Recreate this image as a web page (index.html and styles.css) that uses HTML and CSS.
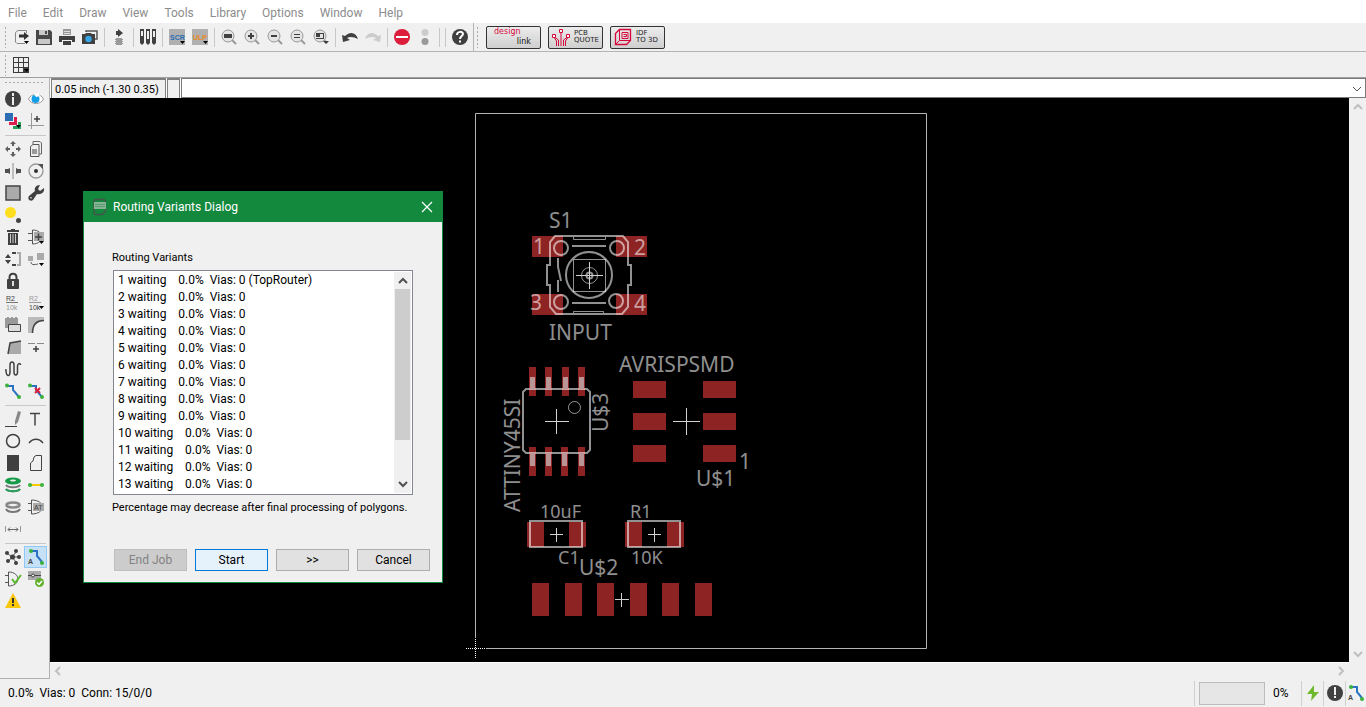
FILE: index.html
```html
<!DOCTYPE html>
<html lang="en">
<head>
    <meta charset="UTF-8">
    <meta name="viewport" content="width=device-width, initial-scale=1.0">
    <title>Board</title>
    <link rel="stylesheet" href="styles.css">
</head>
<body>

<nav class="menubar">
    <a href="#">File</a>
    <a href="#">Edit</a>
    <a href="#">Draw</a>
    <a href="#">View</a>
    <a href="#">Tools</a>
    <a href="#">Library</a>
    <a href="#">Options</a>
    <a href="#">Window</a>
    <a href="#">Help</a>
</nav>

<div class="toolbar">
    <span class="grip"></span>
    <button class="tool" aria-label="Open"><svg viewBox="0 0 16 16"><path d="M10 1.500H5L2.500 3.500V13l1.500 1.500H12M13.500 4V1.500H9" fill="none" stroke="#888"/><path d="M6 5.500h5V3l5 4-5 4V8.500H6z" fill="#333"/><path d="M11 12h5l-2.500 3z"/></svg></button>
    <button class="tool" aria-label="Save"><svg viewBox="0 0 16 16"><path d="M0 1h14l2 2v13H0z" fill="#484848"/><path d="M3 1h9v5H3zM2 10h12v5H2z" fill="#c8c8c8"/><path d="M9 2h2v3H9z" fill="#484848"/></svg></button>
    <button class="tool" aria-label="Print"><svg viewBox="0 0 16 16"><path d="M4 0h8v6H4z" fill="#999"/><path d="M5 2.500h6M5 4.500h6" stroke="#ddd"/><path d="M0 7h16v6h-3v-2H3v2H0zM4 12h8v4H4z" fill="#404040"/></svg></button>
    <button class="tool" aria-label="CAM Processor"><svg viewBox="0 0 16 16"><path d="M4 3V2h11v8h-2" fill="none" stroke="#555" stroke-width="1.500"/><path d="M0 5h3l1-1h5l1 1h3v10H0z" fill="#404040"/><circle cx="6.500" cy="10" r="3.200" fill="#35a5e8"/></svg></button>
    <span class="sep"></span>
    <button class="tool" aria-label="Board"><svg viewBox="0 0 16 16"><path d="M5 2h2V0l5 4-5 4V6H5z" fill="#404040"/><path d="M5 9h6v7H5z" fill="#999"/><path d="M4 10.500h8M4 12.500h8M4 14.500h8" stroke="#999"/></svg></button>
    <span class="sep"></span>
    <button class="tool" aria-label="Use library"><svg viewBox="0 0 16 16"><path d="M0 0h4v14l-2 2-2-2zM6 0h4v14l-2 2-2-2zM12 0h4v14l-2 2-2-2z" fill="#404040"/><path d="M1 2h2v5H1zM7 2h2v8H7zM13 2h2v6h-2z" fill="#eee"/></svg></button>
    <span class="sep"></span>
    <button class="tool" aria-label="Script"><svg viewBox="0 0 16 16"><path d="M0 0h16v16H0z" fill="#b0b0b0"/><text x="1" y="11" class="tiny blue">SCR</text><path d="M11 12h5l-2.500 3z"/></svg></button>
    <button class="tool" aria-label="Run ULP"><svg viewBox="0 0 16 16"><path d="M0 0h16v16H0z" fill="#b0b0b0"/><text x="1" y="11" class="tiny orange">ULP</text><path d="M11 12h5l-2.500 3z"/></svg></button>
    <span class="sep"></span>
    <button class="tool" aria-label="Fit"><svg viewBox="0 0 16 16" class="lens"><path d="M11 11l4 4"/><circle cx="7" cy="7" r="6"/><path d="M3 5h8v4H3z" class="mark"/></svg></button>
    <button class="tool" aria-label="Zoom in"><svg viewBox="0 0 16 16" class="lens"><path d="M11 11l4 4"/><circle cx="7" cy="7" r="6"/><path d="M4 6h2V4h2v2h2v2H8v2H6V8H4z" class="mark"/></svg></button>
    <button class="tool" aria-label="Zoom out"><svg viewBox="0 0 16 16" class="lens"><path d="M11 11l4 4"/><circle cx="7" cy="7" r="6"/><path d="M4 6h6v2H4z" class="mark"/></svg></button>
    <button class="tool" aria-label="Redraw"><svg viewBox="0 0 16 16" class="lens"><path d="M11 11l4 4"/><circle cx="7" cy="7" r="6"/><path d="M4 5h6v1H4zM4 8h6v1H4z" class="mark"/></svg></button>
    <button class="tool" aria-label="Select"><svg viewBox="0 0 16 16" class="lens"><path d="M11 11l3 3"/><circle cx="7" cy="7" r="6"/><path d="M3 4h8v1H3zM3 9h8v1H3zM10 4h1v6h-1zM3 4h4v4H3zM10 12h6l-3 3z" class="mark"/></svg></button>
    <span class="sep"></span>
    <button class="tool" aria-label="Undo"><svg viewBox="0 0 16 16"><path d="M0 6l1 7 7-2-3-2c3-2 7-1 11 1C14 3 8 2 3 7z" fill="#404040"/></svg></button>
    <button class="tool" aria-label="Redo"><svg viewBox="0 0 16 16"><path d="M16 6l-1 7-7-2 3-2C8 7 4 8 0 10 2 3 8 2 13 7z" fill="#ccc"/></svg></button>
    <span class="sep"></span>
    <button class="tool" aria-label="Stop"><svg viewBox="0 0 16 16"><circle cx="8" cy="8" r="8" fill="#dc1e3c"/><path d="M2 7h12v2H2z" fill="#fff"/></svg></button>
    <button class="tool" aria-label="Go"><svg viewBox="0 0 16 16"><circle cx="8" cy="3.500" r="3.500" fill="#ccc"/><circle cx="8" cy="12.500" r="3.500" fill="#999"/></svg></button>
    <span class="sep"></span>
    <span class="sep"></span>
    <button class="tool" aria-label="Help"><svg viewBox="0 0 16 16"><circle cx="8" cy="8" r="8" fill="#404040"/><path d="M5 6c0-4 6-4 6-1 0 2-3 2-3 5" fill="none" stroke="#fff" stroke-width="2"/><path d="M7 11.500h2v2H7z" fill="#fff"/></svg></button>
    <span class="toolbar-end"></span>
    <span class="grip"></span>
    <div class="links">
        <button class="link-btn design"><span>design</span><span class="link-word">link</span></button>
        <button class="link-btn"><svg viewBox="0 0 18 18"><path d="M6.500 18v-6l-4-3M9 18V5M11.500 18v-6l4-3M4.500 18v-5l-2-3M13.500 18v-5l2-3" fill="none" stroke="#d6083b"/><path d="M.500 6.500h3v3h-3zM7.500 1.500h3v3h-3zM14.500 6.500h3v3h-3z" fill="#fff" stroke="#d6083b"/></svg><span>PCB<br>QUOTE</span></button>
        <button class="link-btn"><svg viewBox="0 0 18 18"><path d="M1.500 5.500l4-4h11v11l-4 4h-11z" fill="none" stroke="#d6083b" stroke-width="1.300"/><path d="M5.500 1.500v11h11M1.500 16.500l4-4M8 4.500h6v6H8zM9.500 8.500h3v-2h-3" fill="none" stroke="#d6083b"/></svg><span>IDF<br>TO 3D</span></button>
    </div>
</div>

<div class="toolbar options">
    <span class="grip"></span>
    <button class="tool" aria-label="Grid"><svg viewBox="0 0 16 16"><path d="M0 0h16v16H0z" fill="#3c3c3c"/><path d="M1 1h4v4H1zM6 1h4v4H6zM11 1h4v4h-4zM1 6h4v4H1zM6 6h4v4H6zM11 6h4v4h-4zM1 11h4v4H1zM6 11h4v4H6z" fill="#eee"/><path d="M11 12h5l-2.500 3z"/></svg></button>
</div>

<div class="main">
    <div class="side">
        <span class="grip-h"></span>
        <div class="side-tools">
            <button class="tool" aria-label="Info"><svg viewBox="0 0 16 16"><circle cx="8" cy="8" r="8" fill="#404040"/><path d="M7 2h2v3H7zM7 6h2v8H7z" fill="#eee"/></svg></button>
            <button class="tool" aria-label="Show"><svg viewBox="0 0 16 16"><path d="M.5 8C3 2 13 2 15.500 8 13 14 3 14 .5 8z" fill="#fff" stroke="#999"/><circle cx="7.500" cy="8" r="4" fill="#139ee8"/><path d="M6 3l2 3 4-1-2-3z" fill="#fff"/></svg></button>
            <button class="tool" aria-label="Layers"><svg viewBox="0 0 16 16"><path d="M0 0h8v8H0z" fill="#2b6cb5"/><path d="M9 4h3v8H4V9h5z" fill="#dc1e4c"/><path d="M13 9h3v7H8v-3h5z" fill="#26a05a"/><path d="M11 12h5l-2.500 3z"/></svg></button>
            <button class="tool" aria-label="Mark"><svg viewBox="0 0 16 16"><path d="M3.500 0v16M0 12.500h16" stroke="#999"/><path d="M6 6h6M9 3v6" stroke="#404040" stroke-width="1.500"/></svg></button>
            <span class="side-sep"></span>
            <button class="tool" aria-label="Move"><svg viewBox="0 0 16 16"><path d="M8 0l3 3H9v2H7V3H5zM8 16l3-3H9v-2H7v2H5zM0 8l3-3v2h2v2H3v2zM16 8l-3-3v2h-2v2h2v2z" fill="#606060"/></svg></button>
            <button class="tool" aria-label="Copy"><svg viewBox="0 0 16 16"><path d="M5 3V.5h7l1.500 1.500v11h-2" fill="none" stroke="#666"/><path d="M2.500 5.500L5 3.500h6v12H2.500z" fill="#eee" stroke="#555"/><path d="M4 8h5v5H4z" fill="#999"/></svg></button>
            <button class="tool" aria-label="Mirror"><svg viewBox="0 0 16 16"><path d="M8 0v16" stroke="#aaa" stroke-width="1.400"/><path d="M0 6h3l2-1v6l-2-1H0zM16 6h-3l-2-1v6l2-1h3z" fill="#505050"/></svg></button>
            <button class="tool" aria-label="Rotate"><svg viewBox="0 0 16 16"><circle cx="8" cy="8" r="7" fill="none" stroke="#999" stroke-width="1.300"/><circle cx="8" cy="8" r="2" fill="#333"/><path d="M10 1h5v5z" fill="#505050"/></svg></button>
            <button class="tool" aria-label="Group"><svg viewBox="0 0 16 16"><path d="M1 1h14v14H1z" fill="#aaa" stroke="#444" stroke-width="1.500"/></svg></button>
            <button class="tool" aria-label="Change"><svg viewBox="0 0 16 16"><path d="M16 3l-4 3-2-2 2-4C8 0 6 3 7 6L1 11c-2 3 1 6 4 4l4-6c4 1 8-2 7-6zM3 14l-1-2 2 .5z" fill="#404040"/></svg></button>
            <button class="tool" aria-label="Paste"><svg viewBox="0 0 16 16"><circle cx="5.500" cy="5.500" r="5.500" fill="#fede1f"/><circle cx="13.500" cy="13.500" r="2.500" fill="#444"/></svg></button>
            <span></span>
            <button class="tool" aria-label="Delete"><svg viewBox="0 0 16 16"><path d="M6 0h4v1h4v2H2V1h4zM3 4h10v12H3z" fill="#404040"/><path d="M5.500 5v9M8 5v9M10.500 5v9" stroke="#ccc"/></svg></button>
            <button class="tool" aria-label="Add"><svg viewBox="0 0 16 16"><path d="M0 4.500h4M0 11.500h4M14 8h2M4.500 1v14C17 15 17 1 4.500 1" fill="none" stroke="#555"/><path d="M6 3h10v9H6z" fill="#aaa"/><path d="M7 8h7M10.500 4.500v7" stroke="#444" stroke-width="1.500"/><path d="M11 12h5l-2.500 3z"/></svg></button>
            <button class="tool" aria-label="Pinswap"><svg viewBox="0 0 16 16"><path d="M0 7l3-4 3 4zM0 9h6l-3 4z" fill="#404040"/><path d="M12 2h3v12h-3" fill="none" stroke="#aaa" stroke-width="2"/><path d="M7 2h4M7 14h4" stroke="#444" stroke-width="2"/></svg></button>
            <button class="tool" aria-label="Replace"><svg viewBox="0 0 16 16"><path d="M0 5h5v5H0zM9 2h7v7H9z" fill="#aaa"/><path d="M3 11c0 3 3 3 7 2" fill="none" stroke="#555"/><path d="M11 12h5l-2.500 3z"/></svg></button>
            <button class="tool" aria-label="Lock"><svg viewBox="0 0 16 16"><path d="M4.500 8V4.500c0-5 7-5 7 0V8" fill="none" stroke="#404040" stroke-width="2"/><rect x="2" y="6" width="12" height="10" rx="1" fill="#404040"/><path d="M7 8h2v5H7z" fill="#ddd"/></svg></button>
            <span></span>
            <button class="tool" aria-label="Name"><svg viewBox="0 0 16 16"><text x="1" y="6" class="tiny">R2</text><path d="M1 7.500h12" stroke="#777"/><text x="1" y="15" class="tiny light">10k</text></svg></button>
            <button class="tool" aria-label="Value"><svg viewBox="0 0 16 16"><text x="1" y="6" class="tiny light">R2</text><path d="M1 7.500h12" stroke="#999"/><text x="1" y="15" class="tiny">10k</text><path d="M11 11h5l-2.500 3z"/></svg></button>
            <button class="tool" aria-label="Smash"><svg viewBox="0 0 16 16"><path d="M0 1h2v-1h2v1h2v-1h2v1h2v-1h2v1h1v9h-1v1H0z" fill="#999"/><path d="M3.500 7.500h12v7h-12z" fill="#ddd" stroke="#444"/></svg></button>
            <button class="tool" aria-label="Miter"><svg viewBox="0 0 16 16"><path d="M0 0h16v4C9 4 5 9 5 16H0z" fill="#bbb"/><path d="M16 3.500C8 3.500 4.500 8 4.500 16" fill="none" stroke="#444" stroke-width="1.500"/></svg></button>
            <button class="tool" aria-label="Split"><svg viewBox="0 0 16 16"><path d="M3 15L5 4l11-2v13z" fill="#aaa"/><path d="M3 15L5 4l11-2" fill="none" stroke="#444" stroke-width="1.500"/></svg></button>
            <button class="tool" aria-label="Optimize"><svg viewBox="0 0 16 16"><path d="M0 4.500h7M9 4.500h7" stroke="#888"/><path d="M5 10h6M8 7v6" stroke="#404040" stroke-width="1.500"/></svg></button>
            <button class="tool" aria-label="Meander"><svg viewBox="0 0 16 16"><path d="M0 9h1c0 7 4 7 4 2V4c0-4 4-4 4 0v7c0 4 3.500 4 3.500 0V5c0-3 3-3 3-1" fill="none" stroke="#404040" stroke-width="1.500"/></svg></button>
            <span></span>
            <button class="tool" aria-label="Route"><svg viewBox="0 0 16 16"><path d="M2 3h6v4l6 7" fill="none" stroke="#2b72c2" stroke-width="2"/><circle cx="2" cy="2.500" r="2" fill="#3cb13c"/><circle cx="14" cy="14" r="2" fill="#3cb13c"/></svg></button>
            <button class="tool" aria-label="Ripup"><svg viewBox="0 0 16 16"><path d="M2 3h6v4l6 7" fill="none" stroke="#2b72c2" stroke-width="2"/><circle cx="2" cy="2.500" r="2" fill="#3cb13c"/><circle cx="14" cy="14" r="2" fill="#3cb13c"/><path d="M7 5l5 5M12 5l-5 5" stroke="#dc1e3c" stroke-width="2"/></svg></button>
            <span class="side-sep"></span>
            <button class="tool" aria-label="Wire"><svg viewBox="0 0 16 16"><path d="M0 15.500h12" stroke="#404040"/><path d="M13 0l3 1-3 10-3 3V10z" fill="#888"/></svg></button>
            <button class="tool" aria-label="Text"><svg viewBox="0 0 16 16"><path d="M2 2.500h10M7 2.500v12" stroke="#444" stroke-width="1.500"/></svg></button>
            <button class="tool" aria-label="Circle"><svg viewBox="0 0 16 16"><circle cx="8" cy="8" r="6.500" fill="none" stroke="#404040" stroke-width="1.500"/></svg></button>
            <button class="tool" aria-label="Arc"><svg viewBox="0 0 16 16"><path d="M1 10c4-5 10-5 14 0" fill="none" stroke="#404040" stroke-width="1.500"/></svg></button>
            <button class="tool" aria-label="Rect"><svg viewBox="0 0 16 16"><path d="M2 0h12v16H2z" fill="#404040"/></svg></button>
            <button class="tool" aria-label="Polygon"><svg viewBox="0 0 16 16"><path d="M2.500 15.500V8L5 6l1-4 2-1.500h5.500v15z" fill="none" stroke="#444"/></svg></button>
            <button class="tool" aria-label="Via"><svg viewBox="0 0 16 16"><path d="M1 8c2 3 12 3 14 0M1 12c2 3 12 3 14 0" fill="none" stroke="#777" stroke-width="2"/><path d="M1 12c2 3 12 3 14 0" fill="none" stroke="#26a05a" stroke-width="2"/><ellipse cx="8" cy="4" rx="8" ry="3.500" fill="#169b48"/><ellipse cx="8" cy="3.500" rx="3" ry="1" fill="#eee"/></svg></button>
            <button class="tool" aria-label="Signal"><svg viewBox="0 0 16 16"><path d="M2 8h12" stroke="#f8c800" stroke-width="2"/><circle cx="2" cy="8" r="2" fill="#3cb13c"/><circle cx="14" cy="8" r="2" fill="#3cb13c"/></svg></button>
            <button class="tool" aria-label="Hole"><svg viewBox="0 0 16 16"><path d="M1 10c2 4 12 4 14 0" fill="none" stroke="#777" stroke-width="2"/><ellipse cx="8" cy="6" rx="6.500" ry="2.500" fill="none" stroke="#888" stroke-width="2.500"/></svg></button>
            <button class="tool" aria-label="Attribute"><svg viewBox="0 0 16 16"><path d="M0 4.500h3M0 11.500h3M3.500 1v14C18 15 18 1 3.500 1" fill="none" stroke="#555"/><path d="M5 4h11v8H5z" fill="#aaa"/><text x="6" y="11" class="tiny">AT</text></svg></button>
            <button class="tool" aria-label="Dimension"><svg viewBox="0 0 16 16"><path d="M.5 5v6M15.500 5v6" stroke="#999"/><path d="M3 8.500h10M5 6.500l-2 2 2 2M11 6.500l2 2-2 2" fill="none" stroke="#666"/></svg></button>
            <span></span>
            <span class="side-sep"></span>
            <button class="tool" aria-label="Ratsnest"><svg viewBox="0 0 16 16"><path d="M7 8L2 4M7 8l5-6M7 8h7M7 8l4 5M7 8l-4 5" stroke="#555"/><g fill="#404040"><circle cx="7.500" cy="8" r="2.500"/><circle cx="2" cy="4" r="2"/><circle cx="11" cy="2" r="2"/><circle cx="14" cy="8" r="2"/><circle cx="11" cy="14" r="2"/><circle cx="3" cy="12" r="2"/></g></svg></button>
            <button class="tool active" aria-label="Autorouter"><svg viewBox="0 0 16 16"><path d="M3 2h6v5l5 6" fill="none" stroke="#2b72c2" stroke-width="2"/><circle cx="3" cy="2" r="2" fill="#3cb13c"/><circle cx="14" cy="14" r="2" fill="#3cb13c"/><text x="0" y="15" class="tiny strong">A</text></svg></button>
            <button class="tool" aria-label="ERC"><svg viewBox="0 0 16 16"><path d="M0 4.500h3M0 11.500h3M3.500 1v14C16 15 16 1 3.500 1" fill="none" stroke="#555"/><path d="M7 8l3 4 6-8" fill="none" stroke="#5cb82e" stroke-width="2"/></svg></button>
            <button class="tool" aria-label="DRC"><svg viewBox="0 0 16 16"><path d="M0 0h13v9H0z" fill="#aaa"/><path d="M0 4.500h13" stroke="#444"/><circle cx="5" cy="4.500" r="1.500" fill="#eee" stroke="#444"/><circle cx="11.500" cy="11.500" r="4.500" fill="#62b22e"/><path d="M9 11.500l2 2 3-3.500" fill="none" stroke="#fff" stroke-width="1.500"/></svg></button>
            <button class="tool" aria-label="Errors"><svg viewBox="0 0 16 16"><path d="M8 0l8 15H0z" fill="#fbc70b"/><path d="M7 5h2v5H7zM7 11h2v2H7z" fill="#333"/></svg></button>
        </div>
    </div>

    <div class="work">
        <div class="command">
            <output class="coords">0.05 inch (-1.30 0.35)</output>
            <span class="mark-cell"></span>
            <div class="cmd-box">
                <select class="cmd" aria-label="Command"><option></option></select>
                <svg class="cmd-arrow" viewBox="0 0 8 8"><path d="M0 2l4 4 4-4"/></svg>
            </div>
        </div>
        <div class="view">
            <div class="canvas">
                <svg class="board">
                    <g transform="translate(-50 -98)">
                        <g class="pad">
                            <path d="M532 236h31v21h-31zM616 236h31v21h-31zM532 294h31v21h-31zM616 294h31v21h-31z"/>
                            <path d="M529 367h7v29h-7zM545 367h7v29h-7zM562 367h7v29h-7zM578 367h7v29h-7z"/>
                            <path d="M529 447h7v29h-7zM545 447h7v29h-7zM561 447h7v29h-7zM578 447h7v29h-7z"/>
                            <path d="M633 381h33v17h-33zM633 413h33v17h-33zM633 445h33v17h-33zM703 381h33v17h-33zM703 413h33v17h-33zM703 445h33v17h-33z"/>
                            <path d="M527 522h17v25h-17zM569 522h17v25h-17zM625 522h17v25h-17zM667 522h17v25h-17z"/>
                            <path d="M532 583h17v33h-17zM565 583h17v33h-17zM597 583h17v33h-17zM630 583h17v33h-17zM662 583h17v33h-17zM695 583h17v33h-17z"/>
                        </g>

                        <!-- board dimension and origin -->
                        <path class="outline" d="M475.500 638V113.500H926.500V648.500H486"/>
                        <path class="origin" d="M466 648.500h20M475.500 639v20"/>

                        <!-- S1 switch -->
                        <path class="silk" d="M555 236h68l5 6v23h3v20h-3v22l-6 7h-66l-6-7v-22h-3v-20h3v-23zM572 246h34M572 303h34M558 258v9l3 14M558 280v12"/>
                        <path class="silk thin" d="M573.500 237v2.500h32V237M573.500 313v-1.500h30v1.500M573.500 259.500h32v32h-32z"/>
                        <circle class="silk" cx="561" cy="248" r="7"/>
                        <circle class="silk" cx="617" cy="248" r="7"/>
                        <circle class="silk" cx="561" cy="302" r="7"/>
                        <circle class="silk" cx="616" cy="301" r="7"/>
                        <circle class="silk" cx="589" cy="275" r="23"/>
                        <circle class="silk thin" cx="589.500" cy="275.500" r="8"/>
                        <circle class="silk" cx="589.500" cy="275.500" r="3"/>

                        <!-- U$3 -->
                        <path class="silk" d="M526 389h61l3 3v58l-3 3h-61l-3-3v-58z"/>
                        <path class="lead" d="M530 377h5v12h-5zM546 377h5v12h-5zM563 377h5v12h-5zM579 377h5v12h-5zM530 453h5v13h-5zM546 453h5v13h-5zM562 453h5v13h-5zM579 453h5v13h-5z"/>
                        <circle class="silk thin" cx="574.500" cy="407.500" r="6"/>

                        <!-- C1, R1 -->
                        <path class="silk" d="M530 521h52v26h-52zM628 521h52v26h-52z"/>

                        <path class="cross" d="M576 275.500h27M589.500 262v27M545 421.500h24M556.500 409v25M673 421.500h27M686.500 408v27M550 534.500h13M556.500 528v14M648 534.500h13M654.500 528v14M615 599.500h14M621.500 593v14"/>

                        <g class="label">
                            <text x="549" y="228">S1</text>
                            <text x="549" y="340">INPUT</text>
                            <text x="533" y="254">1</text>
                            <text x="634" y="255">2</text>
                            <text x="530" y="310">3</text>
                            <text x="634" y="311">4</text>
                            <text x="619" y="372">AVRISPSMD</text>
                            <text x="739" y="469">1</text>
                            <text x="696" y="486">U$1</text>
                            <text x="579" y="575">U$2</text>
                            <text transform="translate(520 512) rotate(-90)">ATTINY45SI</text>
                            <text transform="translate(608 432) rotate(-90)">U$3</text>
                        </g>
                        <g class="label small">
                            <text x="540" y="518">10uF</text>
                            <text x="630" y="518">R1</text>
                            <text x="558" y="564">C1</text>
                            <text x="631" y="564">10K</text>
                        </g>
                    </g>
                </svg>

                <div class="dialog" role="dialog" aria-labelledby="dialogTitle">
                    <div class="dialog-title">
                        <svg class="dialog-icon" viewBox="0 0 16 16"><path d="M3 .500h9l1.500 1.500v10l-3 3.500H3L2 14V2z" fill="none" stroke="#46564c" stroke-width="1.500"/><path d="M2 3h12v7H2z" fill="#86b596"/><path d="M3 5.500h10M3 7.500h10" stroke="#5d9a70"/></svg>
                        <span id="dialogTitle">Routing Variants Dialog</span>
                        <button class="close" aria-label="Close"><svg viewBox="0 0 10 10"><path d="M0 0l10 10M10 0L0 10" stroke="#fff" stroke-width="1.200"/></svg></button>
                    </div>
                    <div class="dialog-body">
                        <div id="variantsLabel" class="list-label">Routing Variants</div>
                        <div class="listbox">
                            <ul role="listbox" aria-labelledby="variantsLabel">
                                <li>1 waiting    0.0%  Vias: 0 (TopRouter)</li>
                                <li>2 waiting    0.0%  Vias: 0</li>
                                <li>3 waiting    0.0%  Vias: 0</li>
                                <li>4 waiting    0.0%  Vias: 0</li>
                                <li>5 waiting    0.0%  Vias: 0</li>
                                <li>6 waiting    0.0%  Vias: 0</li>
                                <li>7 waiting    0.0%  Vias: 0</li>
                                <li>8 waiting    0.0%  Vias: 0</li>
                                <li>9 waiting    0.0%  Vias: 0</li>
                                <li>10 waiting    0.0%  Vias: 0</li>
                                <li>11 waiting    0.0%  Vias: 0</li>
                                <li>12 waiting    0.0%  Vias: 0</li>
                                <li>13 waiting    0.0%  Vias: 0</li>
                            </ul>
                            <div class="scroll">
                                <svg viewBox="0 0 8 8"><path d="M0 6l4-4 4 4"/></svg>
                                <span class="thumb"></span>
                                <svg viewBox="0 0 8 8"><path d="M0 2l4 4 4-4"/></svg>
                            </div>
                        </div>
                        <div class="note">Percentage may decrease after final processing of polygons.</div>
                        <div class="buttons">
                            <button disabled>End Job</button>
                            <button class="default">Start</button>
                            <button>&gt;&gt;</button>
                            <button>Cancel</button>
                        </div>
                    </div>
                </div>
            </div>
            <div class="vscroll">
                <svg viewBox="0 0 8 8"><path d="M0 6l4-4 4 4"/></svg>
                <svg viewBox="0 0 8 8"><path d="M0 2l4 4 4-4"/></svg>
            </div>
        </div>
        <div class="hscroll">
            <svg viewBox="0 0 8 8"><path d="M6 0L2 4l4 4"/></svg>
            <svg viewBox="0 0 8 8"><path d="M2 0l4 4-4 4"/></svg>
        </div>
    </div>
</div>

<footer class="status">
    <span class="status-text">0.0%  Vias: 0  Conn: 15/0/0</span>
    <label class="progress"><progress value="0" max="100"></progress><span>0%</span></label>
    <span class="status-icon"><svg viewBox="0 0 16 16"><path d="M9 0L2 9h5l-1 7 8-9H9z" fill="#6fb92c"/></svg></span>
    <span class="status-icon"><svg viewBox="0 0 16 16"><circle cx="8" cy="8" r="8" fill="#404040"/><path d="M7 2h2v8H7zM7 11h2v2H7z" fill="#eee"/></svg></span>
    <span class="status-icon"><svg viewBox="0 0 16 16"><path d="M3 2h6v5l5 6" fill="none" stroke="#2b72c2" stroke-width="2"/><circle cx="3" cy="2" r="2" fill="#3cb13c"/><circle cx="14" cy="14" r="2" fill="#3cb13c"/><text x="0" y="15" class="tiny strong">A</text></svg></span>
</footer>

</body>
</html>
```
FILE: styles.css
```css
* { box-sizing: border-box; }
body { margin: 0; height: 100vh; display: flex; flex-direction: column; background: #f0f0f0; color: #000; font: 12px Roboto, "Noto Sans", sans-serif; overflow: hidden; }
button { font: inherit; color: inherit; padding: 0; margin: 0; }
svg { display: block; overflow: visible; }

/* menu */
.menubar { display: flex; height: 23px; flex: none; align-items: center; gap: 16px; padding: 3px 8px 0; background: #fff; }
.menubar a { color: #8c8c8c; text-decoration: none; }

/* toolbars */
.toolbar { display: flex; align-items: center; height: 29px; flex: none; border-bottom: 1px solid #b4b4b4; }
.toolbar.options { height: 26px; border-bottom: 1px solid #a0a0a0; }
.grip { width: 3px; height: 22px; margin: 0 2px 0 4px; background: radial-gradient(circle, #aaa 1px, transparent 1px) 0 0 / 3px 4px; }
.tool { width: 23px; height: 22px; display: flex; align-items: center; justify-content: center; padding-left: 1px; background: none; border: 1px solid transparent; }
.tool svg { width: 16px; height: 16px; flex: none; }
.tool.active { background: #c5e0f7; border-color: #90c8f6; }
.sep { width: 6px; height: 19px; background: linear-gradient(#c8c8c8, #c8c8c8) center / 1px 100% no-repeat; }
.toolbar-end { width: 2px; align-self: stretch; margin-left: 1px; border-right: 1px solid #b4b4b4; }
.toolbar-end + .grip { margin: 0 7px 0 2px; }
.links { display: flex; gap: 7px; }
.link-btn { width: 55px; height: 23px; display: flex; align-items: center; gap: 4px; padding: 0 3px; border: 1px solid #333; border-radius: 2px; background: linear-gradient(#ececec, #cfcfcf); font: 7px/7px "DejaVu Sans", sans-serif; text-align: left; color: #222; }
.link-btn svg { width: 18px; height: 18px; flex: none; }
.link-btn.design { flex-direction: column; align-items: flex-start; justify-content: center; gap: 0; padding: 0 9px 0 7px; font: 8px/10px "DejaVu Sans", sans-serif; color: #d6083b; }
.link-word { align-self: flex-end; color: #111; }
.lens path, .lens circle { fill: none; stroke: #999; stroke-width: 2; }
.lens circle { stroke-width: 1; fill: #e4e4e4; }
.lens .mark { fill: #404040; stroke: none; }
.tiny { font: 7px "Liberation Sans", sans-serif; fill: #444; }
.tiny.light { fill: #999; }
.tiny.blue { fill: #2b6cb5; font-weight: bold; }
.tiny.orange { fill: #e88a1c; font-weight: bold; }
.tiny.strong { font-weight: bold; }

/* left side */
.main { flex: 1; min-height: 0; display: flex; }
.side { width: 50px; flex: none; border: 1px solid #b0b0b0; border-width: 0 1px 1px 0; }
.grip-h { display: block; height: 4px; margin: 3px 4px 3px; background: radial-gradient(circle, #aaa 1px, transparent 1px) 0 0 / 4px 3px; }
.side-tools { display: grid; grid-template-columns: 23px 23px; grid-auto-rows: min-content; padding-left: 1px; }
.side-sep { grid-column: 1 / 3; height: 6px; margin: 0 1px 0 4px; background: linear-gradient(#c8c8c8, #c8c8c8) center / 100% 1px no-repeat; }

/* work area */
.work { flex: 1; min-width: 0; display: flex; flex-direction: column; }
.command { display: flex; gap: 1px; height: 20px; flex: none; padding-left: 1px; background: #fff; }
.coords { width: 115px; flex: none; padding: 0 3px; white-space: nowrap; font-size: 11px; line-height: 19px; background: #f0f0f0; border: 1px solid #808080; border-width: 2px 1px 0 1px; }
.mark-cell { width: 13px; background: #f0f0f0; border: 1px solid #808080; border-width: 2px 1px 0 1px; }
.cmd-box { flex: 1; min-width: 0; display: flex; position: relative; }
.cmd { flex: 1; min-width: 0; appearance: none; border: 1px solid #7a7a7a; border-radius: 0; background: #fff; }
.cmd-arrow { position: absolute; right: 5px; top: 7px; width: 8px; height: 8px; fill: none; stroke: #555; pointer-events: none; }
.view { flex: 1; min-height: 0; display: flex; }
.canvas { flex: 1; position: relative; min-width: 0; background: #000; border-bottom: 1px solid #fff; }
.board { width: 100%; height: 100%; }
.vscroll, .hscroll { display: flex; justify-content: space-between; align-items: center; flex: none; }
.vscroll { width: 17px; flex-direction: column; padding: 5px 0; }
.hscroll { height: 16px; padding: 0 21px 0 4px; }
.vscroll svg, .hscroll svg, .scroll svg { width: 8px; height: 8px; fill: none; stroke: #bfbfbf; stroke-width: 2; }
.scroll svg { stroke: #505050; }

.pad { fill: #8d2323; }
.outline { fill: none; stroke: #b4b4b4; }
.origin { stroke: #fff; stroke-dasharray: 1 1; }
.silk { fill: none; stroke: rgba(255, 255, 255, 0.57); stroke-width: 2; }
.silk.thin { stroke-width: 1; }
.lead { fill: #b99595; }
.cross { stroke: #d2d2d2; }
.label { font: 21px "Noto Sans", sans-serif; fill: rgba(255, 255, 255, 0.57); }
.label.small { font-size: 18px; }

/* routing variants */
.dialog { position: absolute; left: 33px; top: 93px; width: 360px; border: 1px solid #12893d; background: #f0f0f0; }
.dialog-title { display: flex; align-items: center; height: 30px; padding: 0 10px 0 8px; background: #12893d; color: #fff; }
.dialog-icon { width: 16px; height: 16px; margin-right: 5px; }
.close { margin-left: auto; border: 0; background: none; }
.close svg { width: 10px; height: 10px; }
.dialog-body { padding: 28px 11px 11px 28px; }
.list-label { font-size: 11px; line-height: 16px; margin-bottom: 4px; }
.listbox { display: flex; width: 300px; height: 225px; margin-left: 1px; border: 1px solid #828790; background: #fff; }
.listbox ul { flex: 1; margin: 0; padding: 1px 4px; list-style: none; }
.listbox li { line-height: 17px; white-space: pre; }
.scroll { width: 17px; margin: 1px; display: flex; flex-direction: column; align-items: center; padding: 5px 0; background: #f0f0f0; }
.thumb { width: 15px; height: 151px; margin: 4px 0 auto; background: #cdcdcd; }
.note { margin-top: 5px; font-size: 11px; line-height: 16px; white-space: nowrap; }
.buttons { display: flex; gap: 8px; margin: 33px 0 0 2px; }
.buttons button { width: 73px; height: 22px; border: 1px solid #adadad; background: #e1e1e1; }
.buttons .default { border-color: #0078d7; background: #e5f1fb; }
.buttons button:disabled { border-color: #bfbfbf; background: #ccc; color: #838383; }

/* status bar */
.status { display: flex; align-items: center; height: 28px; flex: none; padding-left: 8px; }
.status-text { flex: 1; white-space: pre; }
.progress { display: flex; align-items: center; gap: 8px; width: 107px; height: 25px; padding-left: 4px; border-left: 1px solid #d0d0d0; }
.progress progress { width: 66px; height: 23px; appearance: none; border: 1px solid #bcbcbc; background: #e6e6e6; }
.progress progress::-webkit-progress-bar { background: #e6e6e6; }
.status-icon { width: 22px; height: 25px; display: flex; align-items: center; justify-content: center; border-left: 1px solid #d0d0d0; }
.status-icon:last-child { width: 21px; }
.status-icon svg { width: 16px; height: 16px; }
```
